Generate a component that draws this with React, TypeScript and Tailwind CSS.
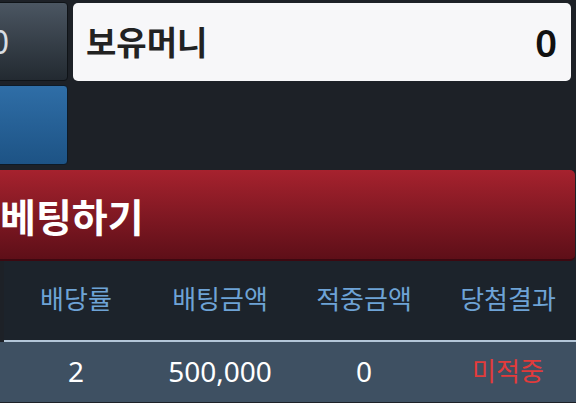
import React from 'react'

const font = { fontFamily: '"Noto Sans", "Noto Sans CJK KR", sans-serif' }

const headers = ['배당률', '배팅금액', '적중금액', '당첨결과']

export default function App() {
  return (
    <div className="w-[576px] h-[403px] overflow-hidden bg-[#1d2127]" style={font}>
      {/* top: side buttons + balance box */}
      <div className="flex gap-[5px] pt-[2px] -ml-[72px] pr-[5px]">
        <div className="flex flex-col gap-[4px] w-[140px] shrink-0">
          <div className="h-[79px] rounded-[4px] border border-[#0f1317] bg-gradient-to-b from-[#4b5662] to-[#232a31] flex items-center justify-end pr-[58px] text-[32px] text-[#d8dde2]">
            0
          </div>
          <div className="h-[80px] rounded-[4px] border border-[#0e1a26] bg-gradient-to-b from-[#2f6ea7] to-[#1d5385]" />
        </div>
        <div className="flex-1 h-[78px] mt-[1px] rounded-[5px] bg-[#f7f7f9] flex items-center justify-between pl-[13px] pr-[14px]">
          <span className="text-[33px] font-bold text-[#222] leading-none">보유머니</span>
          <span className="text-[38px] font-semibold text-[#111] leading-none">0</span>
        </div>
      </div>

      {/* bet button */}
      <div className="mt-[5px] -ml-[10px] mr-[1px] h-[91px] rounded-[5px] border-b-2 border-[#3d0810] bg-gradient-to-b from-[#a6222e] to-[#5e0f18] flex items-center pl-[10px] pt-[3px]">
        <span className="text-[39px] font-bold text-white leading-none">베팅하기</span>
      </div>

      {/* table */}
      <div className="grid grid-cols-[144px_144px_144px_144px] ml-[4px] h-[81px] items-center bg-[#1c232b] border-b-2 border-[#b3c6d8]">
        {headers.map((h) => (
          <div key={h} className="text-center text-[26px] text-[#6ea3d6] -mt-[2px]">
            {h}
          </div>
        ))}
      </div>
      <div className="grid grid-cols-[144px_144px_144px_144px] pl-[4px] h-[60px] items-center bg-[#3e5062]">
        <div className="text-center text-[28px] text-white -mt-[2px]">2</div>
        <div className="text-center text-[28px] text-white -mt-[2px]">500,000</div>
        <div className="text-center text-[28px] text-white -mt-[2px]">0</div>
        <div className="text-center text-[26px] text-[#e23b3b] -mt-[2px]">미적중</div>
      </div>
    </div>
  )
}
